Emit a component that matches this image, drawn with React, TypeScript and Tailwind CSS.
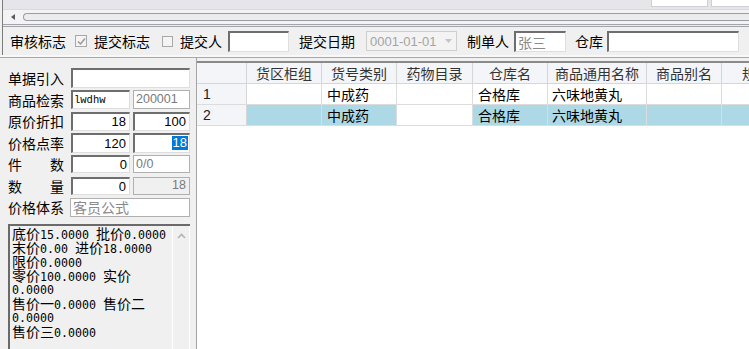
import React from "react";

const CJK = /([\u3000-\u9fff]+)/;

function Mixed({ text }: { text: string }) {
  const parts = text.split(CJK).filter((p) => p.length > 0);
  return (
    <>
      {parts.map((p, i) =>
        /[\u3000-\u9fff]/.test(p) ? (
          <span key={i} className="font-['Noto_Sans_CJK_SC',sans-serif] text-[14px] leading-[14px]">
            {p}
          </span>
        ) : (
          <span key={i} className="font-['DejaVu_Sans_Mono',monospace] text-[11.65px] leading-[14px]">
            {p}
          </span>
        )
      )}
    </>
  );
}

function Label({ children, className = "" }: { children: React.ReactNode; className?: string }) {
  return (
    <span className={"shrink-0 whitespace-nowrap leading-none font-['Noto_Sans_CJK_SC',sans-serif] text-[14px] text-black " + className}>
      {children}
    </span>
  );
}

const sunken =
  "bg-white border-t-2 border-l-2 border-t-[#6e6e6e] border-l-[#6e6e6e] border-r border-b border-r-[#dedede] border-b-[#dedede]";
const flat = "border border-[#b0b0b0]";

const lines = [
  "底价15.0000 批价0.0000",
  "末价0.00 进价18.0000",
  "限价0.0000",
  "零价100.0000 实价",
  "0.0000",
  "售价一0.0000 售价二",
  "0.0000",
  "售价三0.0000",
];

const headerCell =
  "shrink-0 h-full flex items-center justify-center border-r border-[#d6d6d6] text-[#333] font-['Noto_Sans_CJK_SC',sans-serif] text-[14px] leading-none whitespace-nowrap";
const dataCell =
  "shrink-0 h-full flex items-center pl-[5px] border-r border-[#dcdcdc] font-['Noto_Sans_CJK_SC',sans-serif] text-[14px] leading-none whitespace-nowrap";

export default function App() {
  return (
    <div className="w-[749px] h-[349px] overflow-hidden bg-[#f0f0f0] flex flex-col font-['Liberation_Sans','Noto_Sans_CJK_SC',sans-serif] text-[14px] text-black">
      {/* top area with left border */}
      <div className="pl-[2px] bg-[#f0f0f0]">
        <div className="border-l border-[#7c7c7c]">
          {/* top strip */}
          <div className="h-[9px] bg-[#e6e6ea] flex justify-end items-start">
            <div className="w-[57px] h-[7px] bg-white border-x border-b border-[#cfcfd4]" />
            <div className="w-[38px] h-[7px] bg-white border-l border-b border-[#cfcfd4] ml-[3px]" />
          </div>
          {/* scrollbar */}
          <div className="h-[15px] bg-[#f3f3f5] border-t border-[#dadade] flex items-center">
            <div className="ml-[8px] w-0 h-0 border-y-[3px] border-y-transparent border-r-[4px] border-r-[#5a5a5a]" />
            <div className="ml-[8px] flex-1 h-[8px] rounded-l-full border border-r-0 border-[#9c9ca4] bg-[#ececef]" />
          </div>
          <div className="h-[3px] border-y border-[#a4a4ac] bg-[#ececef]" />
          {/* toolbar */}
          <div className="h-[28px] flex items-center pl-[7px]">
            <Label>审核标志</Label>
            <div className="ml-[9px] w-[12px] h-[12px] border border-[#a8a8a8] bg-[#f4f4f4] flex items-center justify-center">
              <svg width="9" height="9" viewBox="0 0 9 9">
                <path d="M1 4.5 L3.5 7 L8 1.5" stroke="#9a9a9a" strokeWidth="1.5" fill="none" />
              </svg>
            </div>
            <Label className="ml-[7px]">提交标志</Label>
            <div className="ml-[12px] w-[11px] h-[11px] border border-[#a8a8a8] bg-[#f4f4f4]" />
            <Label className="ml-[7px]">提交人</Label>
            <div className={"ml-[6px] w-[61px] h-[21px] " + sunken} />
            <Label className="ml-[10px]">提交日期</Label>
            <div className="ml-[11px] w-[91px] h-[20px] border border-[#cfcfcf] bg-[#f3f3f3] flex items-center justify-between pl-[3px] pr-[4px]">
              <span className="font-['Liberation_Sans',sans-serif] text-[13px] text-[#a4a4a4] leading-none">0001-01-01</span>
              <svg width="7" height="4" viewBox="0 0 7 4">
                <path d="M0 0 L7 0 L3.5 4 Z" fill="#c4c4c4" />
              </svg>
            </div>
            <Label className="ml-[10px]">制单人</Label>
            <div className={"ml-[5px] w-[52px] h-[21px] flex items-center pl-[2px] " + sunken}>
              <Label className="!text-[#8a8a8a]">张三</Label>
            </div>
            <Label className="ml-[9px]">仓库</Label>
            <div className={"ml-[4px] w-[132px] h-[21px] " + sunken} />
          </div>
        </div>
      </div>
      <div className="h-[3px] bg-[#f8f8f8] border-b border-[#a8a8a8]" />
      {/* content */}
      <div className="flex-1 flex min-h-0">
        {/* left panel */}
        <div className="w-[197px] shrink-0 flex flex-col pt-[10px] pl-[8px] border-r border-[#a4a4a4]">
          <div className="flex flex-col gap-[1.5px]">
            <div className="h-[20px] flex items-center">
              <Label className="w-[63px]">单据引入</Label>
              <div className={"w-[119px] h-[20px] " + sunken} />
            </div>
            <div className="h-[20px] flex items-center">
              <Label className="w-[63px]">商品检索</Label>
              <div className={"w-[59px] h-[19px] flex items-center pl-[1px] " + sunken}>
                <span className="font-['Liberation_Mono',monospace] text-[10.5px] leading-none">lwdhw</span>
              </div>
              <div className={"ml-[3px] w-[57px] h-[19px] bg-white flex items-center pl-[2px] " + flat}>
                <span className="font-['Liberation_Sans',sans-serif] text-[12.5px] leading-none text-[#7a7a7a]">200001</span>
              </div>
            </div>
            <div className="h-[20px] flex items-center">
              <Label className="w-[63px]">原价折扣</Label>
              <div className={"w-[59px] h-[19px] flex items-center justify-end pr-[3px] " + sunken}>
                <span className="font-['Liberation_Sans',sans-serif] text-[13px] leading-none">18</span>
              </div>
              <div className={"ml-[3px] w-[57px] h-[19px] flex items-center justify-end pr-[3px] " + sunken}>
                <span className="font-['Liberation_Sans',sans-serif] text-[13px] leading-none">100</span>
              </div>
            </div>
            <div className="h-[20px] flex items-center">
              <Label className="w-[63px]">价格点率</Label>
              <div className={"w-[59px] h-[20px] flex items-center justify-end pr-[3px] " + sunken}>
                <span className="font-['Liberation_Sans',sans-serif] text-[13px] leading-none">120</span>
              </div>
              <div className={"ml-[3px] w-[57px] h-[20px] flex items-center justify-end pr-[1px] " + sunken}>
                <span className="font-['Liberation_Sans',sans-serif] text-[13px] leading-[14px] bg-[#0078d7] text-white px-[1px]">18</span>
              </div>
            </div>
            <div className="h-[20px] flex items-center">
              <div className="w-[63px] shrink-0 flex">
                <div className="w-[56px] flex justify-between">
                  <Label>件</Label>
                  <Label>数</Label>
                </div>
              </div>
              <div className={"w-[59px] h-[18px] flex items-center justify-end pr-[2px] " + sunken}>
                <span className="font-['Liberation_Sans',sans-serif] text-[13px] leading-none">0</span>
              </div>
              <div className={"ml-[3px] w-[57px] h-[18px] bg-white flex items-center pl-[2px] " + flat}>
                <span className="font-['Liberation_Sans',sans-serif] text-[12.5px] leading-none text-[#7a7a7a]">0/0</span>
              </div>
            </div>
            <div className="h-[20px] flex items-center">
              <div className="w-[63px] shrink-0 flex">
                <div className="w-[56px] flex justify-between">
                  <Label>数</Label>
                  <Label>量</Label>
                </div>
              </div>
              <div className={"w-[59px] h-[18px] flex items-center justify-end pr-[3px] " + sunken}>
                <span className="font-['Liberation_Sans',sans-serif] text-[13px] leading-none">0</span>
              </div>
              <div className={"ml-[3px] w-[57px] h-[18px] bg-[#f0f0f0] flex items-center justify-end pr-[3px] " + flat}>
                <span className="font-['Liberation_Sans',sans-serif] text-[12.5px] leading-none text-[#7a7a7a]">18</span>
              </div>
            </div>
            <div className="h-[20px] flex items-center">
              <Label className="w-[62px]">价格体系</Label>
              <div className={"w-[120px] h-[19px] bg-white flex items-center pl-[2px] " + flat}>
                <Label className="!text-[#8a8a8a]">客员公式</Label>
              </div>
            </div>
          </div>
          {/* textarea */}
          <div className="mt-[7px] w-[182px] flex-1 flex border-t-2 border-l-2 border-t-[#6a6a6a] border-l-[#6a6a6a] bg-[#f0f0f0] min-h-0 overflow-hidden">
            <div className="flex-1 pl-[2px] pt-0">
              {lines.map((l, i) => (
                <div key={i} className="h-[14px] leading-[14px] whitespace-pre text-black overflow-visible">
                  <Mixed text={l} />
                </div>
              ))}
            </div>
            <div className="w-[18px] shrink-0 border-l border-white border-r border-r-white bg-[#f0f0f0] flex justify-center pt-[7px]">
              <svg width="9" height="6" viewBox="0 0 9 6">
                <path d="M1 5 L4.5 1.5 L8 5" stroke="#b4b4b4" strokeWidth="1.6" fill="none" />
              </svg>
            </div>
          </div>
        </div>
        {/* grid */}
        <div className="flex-1 min-w-0 flex flex-col pt-[3px] overflow-hidden">
          <div className="flex-1 flex flex-col bg-white border-t-2 border-[#8a8a8a] overflow-hidden">
            <div className="h-[21px] flex bg-[#f4f5f8] border-b border-[#d6d6d6] shrink-0">
              <div className={headerCell + " w-[50px]"} />
              <div className={headerCell + " w-[75px]"}>货区柜组</div>
              <div className={headerCell + " w-[75px]"}>货号类别</div>
              <div className={headerCell + " w-[76px]"}>药物目录</div>
              <div className={headerCell + " w-[75px]"}>仓库名</div>
              <div className={headerCell + " w-[99px]"}>商品通用名称</div>
              <div className={headerCell + " w-[75px]"}>商品别名</div>
              <div className="shrink-0 h-full flex items-center pl-[20px] text-[#333] font-['Noto_Sans_CJK_SC',sans-serif] text-[14px] leading-none whitespace-nowrap w-[100px]">规格</div>
            </div>
            <div className="h-[21px] flex border-b border-[#dcdcdc] shrink-0">
              <div className="shrink-0 h-full w-[50px] flex items-center pl-[6px] bg-[#f4f5f8] border-r border-[#d6d6d6] font-['Liberation_Sans',sans-serif] text-[14px] text-[#222] leading-none">1</div>
              <div className={dataCell + " w-[75px]"} />
              <div className={dataCell + " w-[75px]"}>中成药</div>
              <div className={dataCell + " w-[76px]"} />
              <div className={dataCell + " w-[75px]"}>合格库</div>
              <div className={dataCell + " w-[99px] !pl-[4px]"}>六味地黄丸</div>
              <div className={dataCell + " w-[75px]"} />
              <div className={dataCell + " w-[100px]"} />
            </div>
            <div className="h-[21px] flex border-b border-[#dcdcdc] shrink-0">
              <div className="shrink-0 h-full w-[50px] flex items-center pl-[6px] bg-[#f4f5f8] border-r border-[#d6d6d6] font-['Liberation_Sans',sans-serif] text-[14px] text-[#222] leading-none">2</div>
              <div className={dataCell + " w-[75px] bg-[#add8e6]"} />
              <div className={dataCell + " w-[75px] bg-[#add8e6]"}>中成药</div>
              <div className={dataCell + " w-[76px] bg-white"} />
              <div className={dataCell + " w-[75px] bg-[#add8e6]"}>合格库</div>
              <div className={dataCell + " w-[99px] !pl-[4px] bg-[#add8e6]"}>六味地黄丸</div>
              <div className={dataCell + " w-[75px] bg-[#add8e6]"} />
              <div className={dataCell + " w-[100px] bg-[#add8e6]"} />
            </div>
          </div>
        </div>
      </div>
    </div>
  );
}
